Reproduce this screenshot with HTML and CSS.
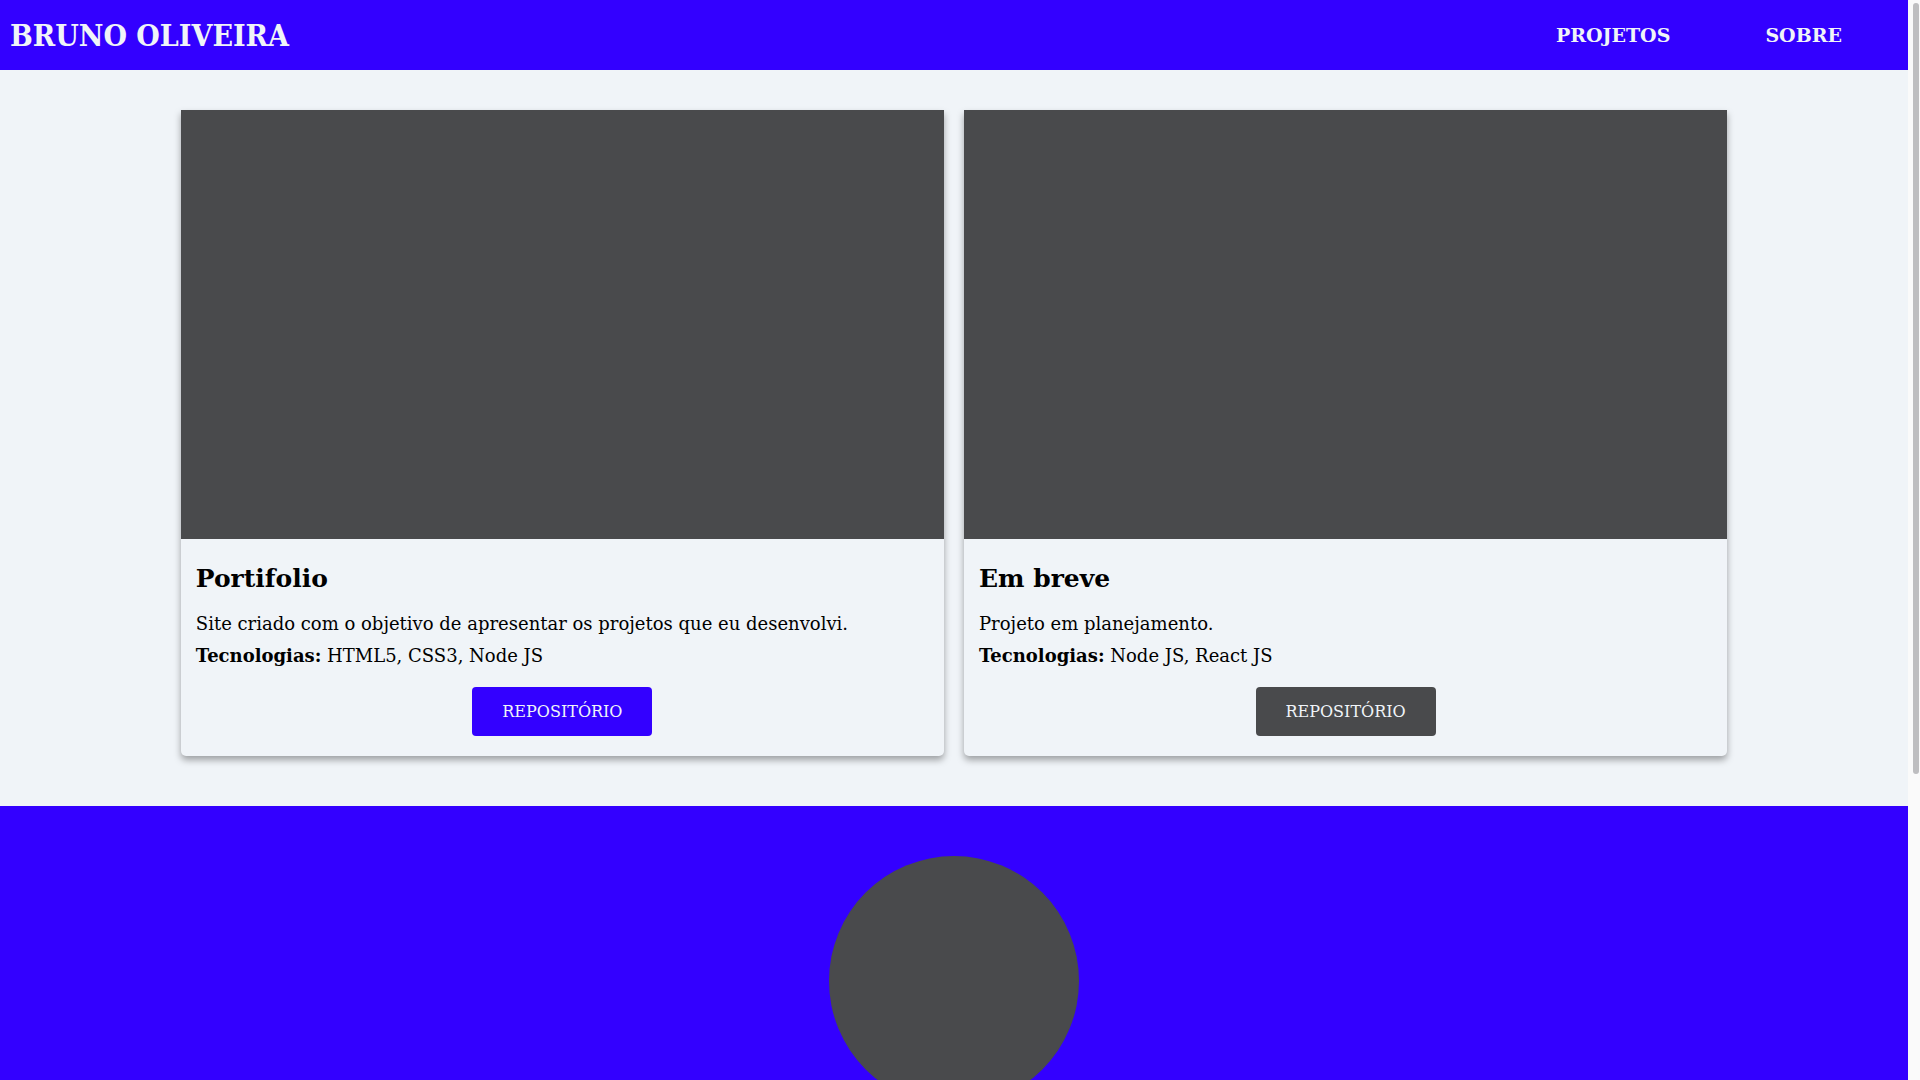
FILE: index.html
```html
<!DOCTYPE html>
<html lang="pt-BR">
<head>
<meta charset="utf-8">
<title>Bruno Oliveira</title>
<link rel="stylesheet" href="styles.css">
</head>
<body>
<header class="topbar">
  <h1 class="brand">BRUNO OLIVEIRA</h1>
  <nav class="nav">
    <a class="nav-link" href="#projetos">PROJETOS</a>
    <a class="nav-link" href="#sobre">SOBRE</a>
  </nav>
</header>
<main class="projects" id="projetos">
  <article class="card">
    <div class="card-image"></div>
    <div class="card-body">
      <h2 class="card-title">Portifolio</h2>
      <p class="card-text">Site criado com o objetivo de apresentar os projetos que eu desenvolvi.</p>
      <p class="card-text"><strong>Tecnologias:</strong> HTML5, CSS3, Node JS</p>
      <div class="card-actions"><a class="btn btn-primary" href="#">REPOSITÓRIO</a></div>
    </div>
  </article>
  <article class="card">
    <div class="card-image"></div>
    <div class="card-body">
      <h2 class="card-title">Em breve</h2>
      <p class="card-text">Projeto em planejamento.</p>
      <p class="card-text"><strong>Tecnologias:</strong> Node JS, React JS</p>
      <div class="card-actions"><a class="btn btn-muted" href="#">REPOSITÓRIO</a></div>
    </div>
  </article>
</main>
<section class="about" id="sobre">
  <div class="avatar"></div>
</section>
<div class="scroll-thumb" aria-hidden="true"></div>
</body>
</html>
```
FILE: styles.css
```css
* { box-sizing: border-box; }
html, body { margin: 0; padding: 0; }
html { background: #fafafa; }
body {
  margin-right: 12px;
  font-family: "DejaVu Serif", serif;
  background: #f0f4f8;
  color: #000;
}
.scroll-thumb {
  position: fixed;
  top: 3px;
  right: 1px;
  width: 6px;
  height: 771px;
  border-radius: 3px;
  background: #bebec0;
}
.topbar {
  height: 70px;
  background: #3300ff;
  color: #f0f4f8;
  display: flex;
  align-items: center;
  justify-content: space-between;
  padding: 0 66px 0 10px;
}
.brand {
  margin: 0;
  font-size: 30px;
  font-stretch: condensed;
  font-family: "DejaVu Serif Condensed", "DejaVu Serif", serif;
  font-weight: bold;
}
.nav {
  display: flex;
  gap: 95px;
}
.nav-link {
  color: #f0f4f8;
  text-decoration: none;
  font-weight: bold;
  font-size: 19px;
}
.projects {
  display: flex;
  justify-content: center;
  gap: 20px;
  padding: 40px 0 50px;
}
.card {
  width: 40%;
  background: #f0f4f8;
  border-radius: 0 0 5px 5px;
  box-shadow: 0 4px 7px rgba(0,0,0,0.35);
}
.card-image {
  aspect-ratio: 16 / 9;
  background: #494a4c;
}
.card-body {
  padding: 25px 15px 20px;
}
.card-title {
  margin: 0 0 20px;
  font-size: 25px;
  line-height: 29px;
}
.card-text {
  margin: 0 0 11px;
  font-size: 18px;
  line-height: 21px;
}
.card-actions {
  display: flex;
  justify-content: center;
  padding-top: 10px;
}
.btn {
  display: block;
  width: 180px;
  height: 49px;
  line-height: 49px;
  text-align: center;
  border-radius: 4px;
  color: #f0f4f8;
  text-decoration: none;
  font-size: 16px;
}
.btn-primary { background: #3300ff; }
.btn-muted { background: #494a4c; }
.about {
  background: #3300ff;
  padding: 50px 0 0;
  height: 702px;
  display: flex;
  justify-content: center;
  align-items: flex-start;
}
.avatar {
  width: 250px;
  height: 250px;
  border-radius: 50%;
  background: #494a4c;
}
```
